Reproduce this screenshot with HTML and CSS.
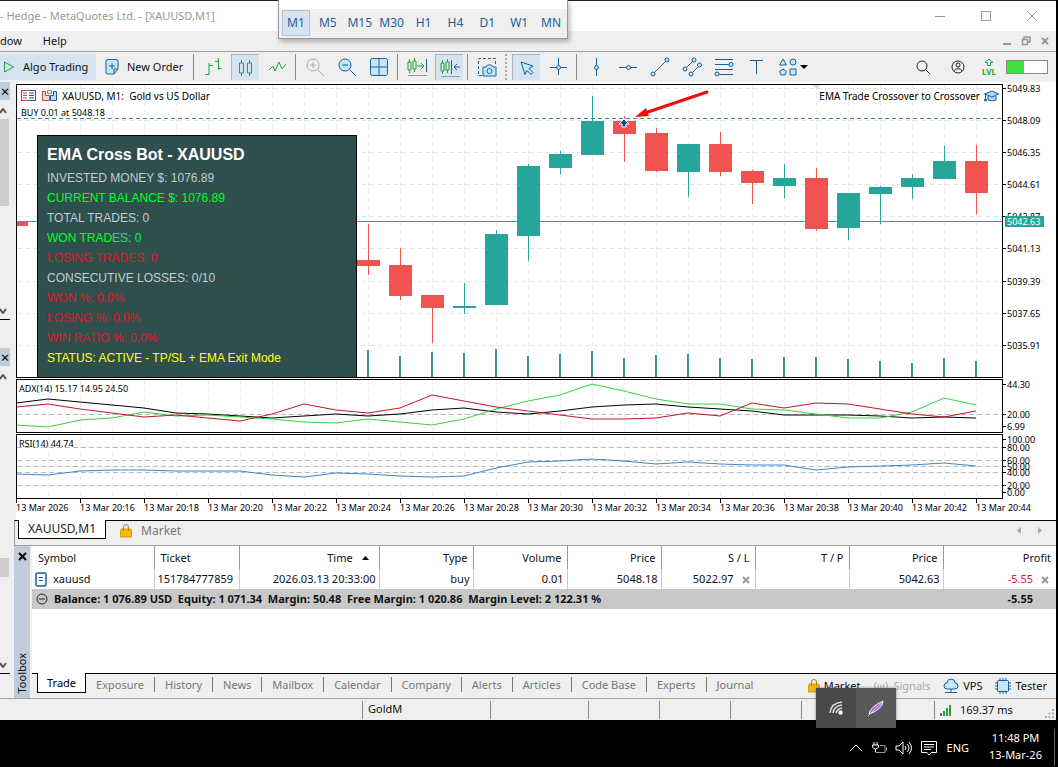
FILE: index.html
```
<!DOCTYPE html>
<html lang="en">
<head>
    <meta charset="utf-8">
    <title>MetaTrader 5 - XAUUSD,M1</title>
    <link rel="stylesheet" href="styles.css">
</head>
<body>
    <div class="window">
        <!-- Title and menu -->
        <header class="titlebar">
            <span class="title-text">- Hedge - MetaQuotes Ltd. - [XAUUSD,M1]</span>
            <div class="window-buttons">
                <button aria-label="Minimize"><svg width="12" height="12"><path d="M1 6.500h10"/></svg></button>
                <button aria-label="Maximize"><svg width="12" height="12"><path d="M1.500 1.500h9v9h-9z"/></svg></button>
                <button aria-label="Close"><svg width="12" height="12"><path d="M1 1l10 10M11 1L1 11"/></svg></button>
            </div>
        </header>
        <nav class="menubar">
            <button>dow</button>
            <button>Help</button>
            <div class="child-buttons">
                <button aria-label="Minimize chart"><svg width="10" height="10"><path d="M1 8h8" stroke-width="2"/></svg></button>
                <button aria-label="Restore chart"><svg width="10" height="10"><path d="M3 3V1h6v5H7M1.500 3.500h5v5h-5z" stroke-width="1.500"/></svg></button>
                <button aria-label="Close chart"><svg width="10" height="10"><path d="M2 2l6 6M8 2L2 8" stroke-width="2"/></svg></button>
            </div>
        </nav>

        <!-- Main toolbar -->
        <div class="toolbar">
            <button class="algo"><svg width="16" height="16"><path class="g" d="M4.500 3l9 5-9 5z"/></svg>Algo Trading</button>
            <button class="order"><svg width="16" height="18"><path class="f" d="M4 1.500h8a2 2 0 0 1 2 2V11l-4 5H4a2 2 0 0 1-2-2V3.500a2 2 0 0 1 2-2z"/><path class="b" d="M14 11h-4v5M8 5v6M5 8h6"/></svg>New Order</button>
            <i class="sep"></i>
            <button class="tool" aria-label="Bar chart"><svg width="20" height="20"><path class="g" d="M6 6v12M2 17.500h4M6 8.500h4M15.500 1v12M12 4.500h3.500M15.500 11.500h3"/></svg></button>
            <button class="tool on" aria-label="Candlesticks"><svg width="20" height="20"><path class="g" d="M5.500 2v3M5.500 15v3M3.500 5h4v10h-4zM13.500 2v3M13.500 15v3M11.500 5h4v10h-4z"/></svg></button>
            <button class="tool" aria-label="Line chart"><svg width="20" height="20"><path class="g" d="M2 13l4-4 2 5 4-9 3 7 4-5"/></svg></button>
            <i class="sep"></i>
            <button class="tool off" aria-label="Zoom in"><svg width="20" height="20"><circle class="b" cx="8" cy="8" r="6"/><path class="b" d="M5 8h6M8 5v6M12.500 12.500L19 19"/></svg></button>
            <button class="tool" aria-label="Zoom out"><svg width="20" height="20"><circle class="f" cx="8" cy="8" r="6"/><path class="b" d="M5 8h6M12.500 12.500L19 19"/></svg></button>
            <button class="tool" aria-label="Tile windows"><svg width="20" height="20"><rect class="f" x="1.500" y="1.500" width="17" height="17" rx="2"/><path class="b" d="M10 2v16M2 10h16"/></svg></button>
            <i class="sep"></i>
            <button class="tool" aria-label="Auto scroll"><svg width="20" height="20"><path class="g" d="M2.500 2v3M2.500 13v3M1 5h3v8H1zM7.500 1v3M7.500 12v3M6 4h3v8H6zM10 9h7M14 6l3 3-3 3"/><path class="b" d="M19.500 2v13"/><path class="m" d="M1 18.500h19"/></svg></button>
            <button class="tool on" aria-label="Chart shift"><svg width="20" height="20"><path class="g" d="M2.500 2v3M2.500 13v3M1 5h3v8H1zM7.500 1v3M7.500 12v3M6 4h3v8H6z"/><path class="b" d="M11.500 2v14M20 9h-6M17 6l-3 3 3 3"/><path class="m" d="M1 18.500h19"/></svg></button>
            <i class="sep"></i>
            <button class="tool" aria-label="Screenshot"><svg width="20" height="20"><path class="b" stroke-dasharray="3 2" d="M5 18.500H1.500v-17h17V7"/><path class="f" d="M6 10h3l1.500-2h4L16 10h3v9H6z"/><circle class="b" cx="12.500" cy="14" r="2.500"/></svg></button>
            <i class="sep dotted"></i>
            <button class="tool on" aria-label="Cursor"><svg width="20" height="20"><path class="f" d="M4 4l12 4-4 2.500 4 4-2 2-4-4-2 4z"/></svg></button>
            <button class="tool" aria-label="Crosshair"><svg width="20" height="20"><path class="b" d="M10.500 1v17M2 10.500h17"/><circle class="f" cx="10.500" cy="10.500" r="2"/></svg></button>
            <i class="sep"></i>
            <button class="tool" aria-label="Vertical line"><svg width="20" height="20"><path class="b" d="M10.500 1v18"/><circle class="f" cx="10.500" cy="10.500" r="2"/></svg></button>
            <button class="tool" aria-label="Horizontal line"><svg width="20" height="20"><path class="b" d="M1 10.500h18"/><circle class="f" cx="10.500" cy="10.500" r="2"/></svg></button>
            <button class="tool" aria-label="Trendline"><svg width="20" height="20"><path class="b" d="M3 17L17 3"/><circle class="f" cx="3" cy="17" r="2"/><circle class="f" cx="17" cy="3" r="2"/></svg></button>
            <button class="tool" aria-label="Channel"><svg width="20" height="20"><path class="b" d="M3 12L12 3M9 17l9-9"/><circle class="f" cx="3" cy="12" r="2"/><circle class="f" cx="12" cy="3" r="2"/><circle class="f" cx="9" cy="17" r="2"/><circle class="f" cx="17.500" cy="8" r="2"/></svg></button>
            <button class="tool" aria-label="Fibonacci"><svg width="20" height="20"><path class="b" d="M1 2.500h18M1 7.500h18M1 12.500h18M1 17.500h18"/><circle class="f" cx="17" cy="7.500" r="2"/><circle class="f" cx="3" cy="17" r="2"/></svg></button>
            <button class="tool" aria-label="Text"><svg width="20" height="20"><path class="b" d="M4 3.500h13M10.500 3.500V17"/></svg></button>
            <button class="tool" aria-label="Shapes"><svg width="20" height="20"><path class="f" d="M5 2l3.500 6h-7zM12 12h6v6h-6zM5 12l3.500 2.500L7 18H3l-1.500-3.500z"/><circle class="f" cx="15" cy="5" r="3"/></svg></button>
            <button class="caret" aria-label="More shapes"><svg width="8" height="6"><path d="M0 1h8L4 5z"/></svg></button>
            <div class="toolbar-right">
                <button class="tool" aria-label="Search"><svg width="20" height="20"><circle class="k" cx="9" cy="9" r="5"/><path class="k" d="M13 13l4 4"/></svg></button>
                <button class="tool" aria-label="Account"><svg width="20" height="20"><circle class="k" cx="10" cy="10" r="6"/><circle class="k" cx="10" cy="8" r="2"/><path class="k" d="M6 14c1-3 7-3 8 0"/></svg></button>
                <button class="level" aria-label="Level"><svg width="12" height="9"><path class="g" d="M6 1l4 3.500H7.500v3h-3v-3H2z"/></svg>LVL</button>
                <div class="battery"><span></span></div>
            </div>
        </div>

        <div class="workspace">
            <!-- Collapsed docks on the left -->
            <aside class="docks">
                <div class="dock dock-top">
                    <button class="dock-close" aria-label="Close Market Watch">×</button>
                    <svg width="8" height="6"><path d="M0 5l3-4 3 4"/></svg>
                    <div class="thumb"></div>
                    <svg class="down" width="8" height="6"><path d="M0 1l3 4 3-4"/></svg>
                </div>
                <div class="dock dock-bottom">
                    <button class="dock-close" aria-label="Close Navigator">×</button>
                    <svg width="8" height="6"><path d="M0 5l3-4 3 4"/></svg>
                    <div class="thumb"></div>
                    <svg class="down" width="8" height="6"><path d="M0 1l3 4 3-4"/></svg>
                </div>
            </aside>

            <main class="main">
                <section class="chart">
                    <div class="pane price">
                        <svg id="pricePlot"></svg>
                        <div class="chart-head">
                            <svg width="36" height="12"><rect x="0.500" y="0.500" width="14" height="10" fill="#fff" stroke="#1d5c96"/><path d="M7 .5H.5v10H7" stroke="#c8403a" fill="none"/><path d="M2 3h4M2 5.500h4M2 8h4" stroke="#d0433c"/><path d="M8 3h5M8 5.500h5M8 8h5" stroke="#1d5c96"/><path d="M21.500 1.500h3v4h4v5h-7z" fill="#fbdad8" stroke="#c8403a"/><path d="M35.500 1.500h-3v4h-3v5h6z" fill="#b5def8" stroke="#1d5c96"/><path d="M26.500 .5h4v3h-4z" fill="#eee" stroke="#888"/></svg>
                            <span>XAUUSD, M1:&nbsp; Gold vs US Dollar</span>
                        </div>
                        <div class="position-label">BUY 0.01 at 5048.18</div>
                        <div class="expert">EMA Trade Crossover to Crossover
                            <svg width="15" height="12"><path d="M4 6v4q4 2 8 0V6" fill="#a9dcf8" stroke="#1d5c96"/><path d="M0.500 4L8 1l6.500 3L8 7z" fill="#a9dcf8" stroke="#1d5c96"/><path d="M1.500 4v5" stroke="#1d5c96"/><circle cx="1.500" cy="10" r="1.500" fill="#1d5c96"/></svg>
                        </div>
                        <div class="bot-panel">
                            <h2>EMA Cross Bot - XAUUSD</h2>
                            <p>INVESTED MONEY $: 1076.89</p>
                            <p class="good">CURRENT BALANCE $: 1076.89</p>
                            <p>TOTAL TRADES: 0</p>
                            <p class="good">WON TRADES: 0</p>
                            <p class="bad">LOSING TRADES: 0</p>
                            <p>CONSECUTIVE LOSSES: 0/10</p>
                            <p class="bad">WON %: 0.0%</p>
                            <p class="bad">LOSING %: 0.0%</p>
                            <p class="bad">WIN RATIO %: 0.0%</p>
                            <p class="status">STATUS: ACTIVE - TP/SL + EMA Exit Mode</p>
                        </div>
                    </div>
                    <svg class="axis" id="priceAxis"></svg>

                    <div class="pane">
                        <svg id="adxPlot"></svg>
                        <div class="pane-label">ADX(14) 15.17 14.95 24.50</div>
                    </div>
                    <svg class="axis" id="adxAxis"></svg>

                    <div class="pane">
                        <svg id="rsiPlot"></svg>
                        <div class="pane-label">RSI(14) 44.74</div>
                    </div>
                    <svg class="axis" id="rsiAxis"></svg>

                    <div class="times" id="times"></div>
                </section>

                <div class="chart-tabs">
                    <button class="active">XAUUSD,M1</button>
                    <button><svg width="12" height="14"><path class="bag" d="M1 5h10l1 8H0z"/><path class="bag-line" d="M3.500 7V3a2 2 0 0 1 5 0v4"/></svg>Market</button>
                    <div class="scroll-arrows">
                        <button aria-label="Scroll left"><svg width="4" height="7"><path d="M4 0v7L0 3.500z"/></svg></button>
                        <button aria-label="Scroll right"><svg width="4" height="7"><path d="M0 0v7l4-3.500z"/></svg></button>
                    </div>
                </div>

                <section class="toolbox">
                    <div class="toolbox-side">
                        <button aria-label="Close Toolbox"><svg width="9" height="9"><path d="M1 1l7 7M8 1L1 8"/></svg></button>
                        <span>Toolbox</span>
                    </div>
                    <div class="toolbox-body">
                        <table class="trades">
                            <colgroup>
                                <col class="c-symbol"><col class="c-ticket"><col class="c-time">
                                <col class="c-num"><col class="c-num"><col class="c-num"><col class="c-num"><col class="c-num"><col class="c-num"><col>
                            </colgroup>
                            <thead>
                                <tr>
                                    <th class="left">Symbol</th>
                                    <th class="left">Ticket</th>
                                    <th>Time <svg class="sort" width="7" height="4"><path d="M0 4l3.500-4L7 4z"/></svg></th>
                                    <th>Type</th>
                                    <th>Volume</th>
                                    <th>Price</th>
                                    <th>S / L</th>
                                    <th>T / P</th>
                                    <th>Price</th>
                                    <th>Profit</th>
                                </tr>
                            </thead>
                            <tbody>
                                <tr>
                                    <td class="left symbol"><svg width="12" height="15"><rect x="1" y="1" width="10" height="13" rx="1.500" fill="#fff" stroke="#1d5c96" stroke-width="1.500"/><path d="M4 5.500h4M4 8.500h4" stroke="#1d5c96"/></svg>xauusd</td>
                                    <td class="left">151784777859</td>
                                    <td>2026.03.13 20:33:00</td>
                                    <td>buy</td>
                                    <td>0.01</td>
                                    <td>5048.18</td>
                                    <td>5022.97<button class="cell-x" aria-label="Remove stop loss"><svg width="8" height="8"><path d="M1 1l6 6M7 1L1 7"/></svg></button></td>
                                    <td></td>
                                    <td>5042.63</td>
                                    <td><span class="loss">-5.55</span><button class="cell-x" aria-label="Close position"><svg width="8" height="8"><path d="M1 1l6 6M7 1L1 7"/></svg></button></td>
                                </tr>
                            </tbody>
                            <tfoot>
                                <tr>
                                    <td colspan="9" class="left"><svg width="12" height="12"><circle cx="6" cy="6" r="5" fill="none" stroke="#222"/><path d="M3 6h6" stroke="#222"/></svg>Balance: 1 076.89 USD&nbsp; Equity: 1 071.34&nbsp; Margin: 50.48&nbsp; Free Margin: 1 020.86&nbsp; Margin Level: 2 122.31 %</td>
                                    <td class="total">-5.55</td>
                                </tr>
                            </tfoot>
                        </table>
                        <nav class="tabs">
                            <button class="active">Trade</button>
                            <button>Exposure</button>
                            <button>History</button>
                            <button>News</button>
                            <button>Mailbox</button>
                            <button>Calendar</button>
                            <button>Company</button>
                            <button>Alerts</button>
                            <button>Articles</button>
                            <button>Code Base</button>
                            <button>Experts</button>
                            <button>Journal</button>
                            <div class="services">
                                <a href="#"><svg width="12" height="14"><path class="bag" d="M1 5h10l1 8H0z"/><path class="bag-line" d="M3.500 7V3a2 2 0 0 1 5 0v4"/></svg>Market</a>
                                <a href="#" class="muted"><svg width="16" height="12"><path d="M3 2q-3 4 0 8M13 2q3 4 0 8M5.500 4q-1.500 2 0 4M10.500 4q1.500 2 0 4M8 5v3" fill="none" stroke="#aaa"/></svg>Signals</a>
                                <a href="#"><svg width="16" height="16"><path class="f" d="M4 11a3 3 0 0 1 0-6 4 4 0 0 1 8 0 3 3 0 0 1 0 6z"/><path class="b" d="M8 11v3M2 14.500h12"/></svg>VPS</a>
                                <a href="#"><svg width="16" height="16"><path class="b" d="M5 0v16M8 0v16M11 0v16M0 5h16M0 8h16M0 11h16"/><rect class="f" x="2.500" y="2.500" width="11" height="11" rx="1"/></svg>Tester</a>
                            </div>
                        </nav>
                    </div>
                </section>
            </main>
        </div>

        <footer class="statusbar">
            <span class="s-help"></span>
            <span class="s-profile">GoldM</span>
            <span class="s-wide"></span>
            <span class="s-cell"></span>
            <span class="s-cell"></span>
            <span class="s-cell"></span>
            <span class="s-rest"></span>
            <span class="s-ping"><svg width="14" height="12"><path d="M1 12V9M4 12V7M7 12V4M10 12V1" stroke="#2a9d3a" stroke-width="2"/></svg>169.37 ms</span>
            <svg class="grip" width="9" height="9"><path d="M7 0h2v2H7zM7 3.500h2v2H7zM7 7h2v2H7zM3.500 3.500h2v2h-2zM3.500 7h2v2h-2zM0 7h2v2H0z"/></svg>
        </footer>
    </div>

    <!-- Floating timeframe bar -->
    <div class="timeframes">
        <button class="on">M1</button>
        <button>M5</button>
        <button>M15</button>
        <button>M30</button>
        <button>H1</button>
        <button>H4</button>
        <button>D1</button>
        <button>W1</button>
        <button>MN</button>
    </div>

    <div class="taskbar">
        <!-- Hidden icons popup -->
        <div class="tray-popup">
            <button aria-label="Cast"><svg width="14" height="14"><path d="M1 12Q2 2 13 1M4 12Q5 5 13 4M7 12Q8 8 13 7" stroke="#ddd" fill="none" stroke-width="1.500"/><path d="M10 10h3v3h-3z" fill="#fff"/></svg></button>
            <button class="lit" aria-label="Feather"><svg width="18" height="18"><path d="M2 15Q3 8 16 2 16 8 7 13z" fill="#9a63cf"/><path d="M1 17Q8 9 15 4" stroke="#e3c8f8" fill="none"/></svg></button>
        </div>
        <button aria-label="Show hidden icons"><svg width="14" height="14"><path d="M1 10l6-6 6 6"/></svg></button>
        <button aria-label="Battery"><svg width="16" height="14"><path d="M3 1v3M6 1v3M1.500 4h6v2q-1 2-3 2-2 0-3-2zM4.500 8v3"/><path d="M4.500 11.500H14v-7H9M15.500 6.500v3" class="dim"/></svg></button>
        <button aria-label="Volume"><svg width="18" height="16"><path d="M1 6h3l4-4v12l-4-4H1zM10 6q2 2 0 4M12 4q4 4 0 8M14 2q5 6 0 12"/></svg></button>
        <button aria-label="Notifications"><svg width="16" height="16"><path d="M.5 1.500h15v11h-5L8 15l-2-2.500H.5zM3 4.500h10M3 7h10M3 9.500h7"/></svg></button>
        <button class="lang">ENG</button>
        <div class="clock"><span>11:48 PM</span><span>13-Mar-26</span></div>
    </div>
    <script src="chart.js"></script>
</body>
</html>
```
FILE: styles.css
```
* {
    box-sizing: border-box;
}

body {
    margin: 0;
    min-height: 100vh;
    display: flex;
    flex-direction: column;
    background: #000;
    color: #111;
    font-family: "Noto Sans", "Open Sans", sans-serif;
    font-size: 11px;
    line-height: 16px;
}

button {
    margin: 0;
    padding: 0;
    border: none;
    background: none;
    color: inherit;
    font: inherit;
}

a {
    color: inherit;
    text-decoration: none;
}

svg {
    display: block;
    flex: none;
}

/* Icon strokes */
.g { fill: none; stroke: #1fa437; }
.b { fill: none; stroke: #1d6099; }
.f { fill: #c3e6fb; stroke: #1d6099; }
.k { fill: none; stroke: #222; }
.m { stroke: #999; }
.off .b { stroke: #aaa; }
.bag { fill: #f5b912; stroke: #d39b0a; }
.bag-line { fill: none; stroke: #b98707; }

.window {
    flex: 1;
    display: flex;
    flex-direction: column;
    margin-right: 2px;
    border-top: 1px solid #222;
    background: #efefef;
}

.titlebar {
    display: flex;
    align-items: center;
    justify-content: space-between;
    height: 30px;
    background: #fff;
    color: #999;
}

.window-buttons {
    display: flex;
    padding-right: 1px;
}

.window-buttons button {
    display: flex;
    justify-content: center;
    width: 46px;
}

.window-buttons svg,
.child-buttons svg {
    fill: none;
    stroke: #999;
}

.menubar {
    display: flex;
    align-items: center;
    gap: 21px;
    height: 21px;
    border-bottom: 1px solid #a0a0a0;
}

.child-buttons {
    display: flex;
    gap: 9px;
    margin-left: auto;
    padding-right: 6px;
}

.toolbar {
    display: flex;
    align-items: center;
    height: 30px;
}

.algo,
.order {
    display: flex;
    align-items: center;
    gap: 7px;
    height: 26px;
}

.algo {
    width: 96px;
    background: #d6e3f1;
}

.order {
    width: 95px;
    padding-left: 8px;
}

.sep {
    width: 6px;
    height: 26px;
    background: linear-gradient(#888, #888) 2px 0 / 1px 100% no-repeat;
}

.sep.dotted {
    width: 7px;
    background: repeating-linear-gradient(#aaa 0 2px, #efefef 2px 4px) 2px 0 / 2px 100% no-repeat;
}

.tool {
    display: flex;
    align-items: center;
    justify-content: center;
    width: 28px;
    height: 26px;
    margin: 0 2px;
}

.tool.on {
    background: #d6e3f1;
    border-top: 1px solid #aab4be;
    border-left: 1px solid #aab4be;
}

.caret {
    margin-left: -4px;
}

.toolbar-right {
    display: flex;
    align-items: center;
    gap: 3px;
    margin-left: auto;
    padding-right: 8px;
}

.level {
    display: flex;
    flex-direction: column;
    align-items: center;
    width: 24px;
    margin-right: 2px;
    color: #1fa437;
    font-size: 8px;
    font-weight: bold;
    line-height: 9px;
}

.battery {
    width: 42px;
    height: 14px;
    border: 1px solid #888;
    background: #fff;
}

.battery span {
    display: block;
    width: 17px;
    height: 12px;
    background: #3fe03f;
}

.workspace {
    flex: 1;
    display: flex;
}

/* Left docks */
.docks {
    display: flex;
    flex-direction: column;
    gap: 28px;
    width: 14px;
    padding-bottom: 24px;
}

.dock {
    display: flex;
    flex-direction: column;
    width: 10px;
    border-bottom: 1px solid #000;
}

.dock-top {
    height: 238px;
}

.dock-bottom {
    flex: 1;
}

.dock svg {
    margin: 8px 0 5px;
    fill: none;
    stroke: #555;
    stroke-width: 2;
}

.dock .down {
    margin: auto 0 5px;
}

.dock-close {
    width: 10px;
    height: 18px;
    overflow: hidden;
    background: #bfccdb;
    color: #000;
    font-size: 15px;
    line-height: 18px;
}

.thumb {
    width: 9px;
    height: 87px;
    background: #cdcdcd;
}

.dock-bottom .thumb {
    height: 19px;
    margin-top: 173px;
}

.main {
    flex: 1;
    display: flex;
    flex-direction: column;
    min-width: 0;
}

/* Chart */
.chart {
    display: grid;
    grid-template-columns: 1fr 53px;
    grid-template-rows: 294px 54px 65px 20px;
    row-gap: 1px;
    margin-left: 2px;
    padding-top: 2px;
    background: #fff;
    color: #000;
    font-size: 9px;
    line-height: 12px;
}

.pane {
    position: relative;
    min-width: 0;
    border: 1px solid #000;
}

.pane > svg,
.axis {
    width: 100%;
    height: 100%;
}

.axis {
    overflow: visible;
}

.chart-head {
    position: absolute;
    top: 5px;
    left: 4px;
    display: flex;
    align-items: center;
    gap: 5px;
    font-size: 10px;
}

.position-label {
    position: absolute;
    top: 22px;
    left: 4px;
}

.pane-label {
    position: absolute;
    top: 3px;
    left: 2px;
}

.expert {
    position: absolute;
    top: 5px;
    right: 3px;
    display: flex;
    align-items: center;
    gap: 4px;
    font-size: 10px;
}

.bot-panel {
    position: absolute;
    top: 50px;
    bottom: 0;
    left: 20px;
    width: 320px;
    padding: 9px 9px 0;
    border: 1px solid #000;
    border-bottom: none;
    background: #2f4f4f;
    color: #c4cccc;
    font-family: "Liberation Sans", Arial, sans-serif;
    font-size: 12px;
    line-height: 20px;
}

.bot-panel h2 {
    margin: 0 0 3px;
    color: #fff;
    font-size: 16px;
    line-height: 20px;
}

.bot-panel p {
    margin: 0;
}

.bot-panel .good { color: #00ff20; }
.bot-panel .bad { color: #e01522; }
.bot-panel .status { color: #ffff20; }

.times {
    grid-column: 1 / 3;
    display: flex;
    margin-top: -1px;
    overflow: hidden;
    white-space: nowrap;
}

.times span {
    flex: none;
    width: 64px;
    padding-top: 3px;
    background: linear-gradient(#000, #000) 0 0 / 1px 4px no-repeat;
}

.chart-tabs {
    display: flex;
    height: 25px;
    padding-left: 3px;
    border-top: 1px solid #000;
    border-left: 1px solid #999;
    color: #777;
    font-size: 12px;
}

.chart-tabs > button {
    display: flex;
    align-items: center;
    gap: 9px;
    height: 19px;
    padding: 0 14px;
}

.chart-tabs .active {
    margin-top: -1px;
    padding: 0 9px;
    border: 1px solid #000;
    border-top: none;
    background: #fff;
    color: #222;
}

.scroll-arrows {
    display: flex;
    gap: 17px;
    margin: 0 14px 6px auto;
    fill: #aaa;
}

/* Toolbox */
.toolbox {
    flex: 1;
    display: flex;
    border-top: 1px solid #a0a0a0;
}

.toolbox-side {
    display: flex;
    flex-direction: column;
    align-items: center;
    justify-content: space-between;
    width: 16px;
    padding: 6px 0 4px;
    background: #bfccdb;
}

.toolbox-side svg {
    stroke: #000;
    stroke-width: 2;
}

.toolbox-side span {
    writing-mode: vertical-rl;
    transform: rotate(180deg);
}

.toolbox-body {
    flex: 1;
    display: flex;
    flex-direction: column;
    justify-content: space-between;
    min-width: 0;
    margin-left: 2px;
    background: #fff;
}

.trades {
    width: 100%;
    border-collapse: collapse;
    table-layout: fixed;
}

.c-symbol { width: 122px; }
.c-ticket { width: 85px; }
.c-time { width: 140px; }
.c-num { width: 94px; }

.trades th,
.trades td {
    height: 20px;
    padding: 0 3px;
    border-right: 1px solid #ccc;
    font-weight: normal;
    text-align: right;
    white-space: nowrap;
}

.trades th {
    height: 23px;
    padding: 0 5px;
    border-right-color: #999;
}

.trades th.left {
    padding-left: 6px;
}

.trades tr > :last-child {
    border-right: none;
}

.trades .left {
    text-align: left;
}

.trades svg {
    display: inline-block;
    vertical-align: middle;
}

.sort {
    margin: 0 5px 2px 6px;
}

.symbol svg {
    margin-right: 6px;
}

.loss {
    color: #e02020;
}

.cell-x {
    margin: 0 2px 0 8px;
}

.trades tr > :last-child .cell-x {
    margin-right: 4px;
}

.cell-x path {
    stroke: #999;
    stroke-width: 2;
}

.trades tfoot td {
    height: 20px;
    border: none;
    background: #c8c8c8;
    font-weight: bold;
}

.trades tfoot svg {
    margin: 0 6px 2px 1px;
}

.trades .total {
    padding-right: 23px;
}

.tabs {
    display: flex;
    align-items: flex-start;
    height: 25px;
    padding-left: 5px;
    border-top: 1px solid #000;
    background: #efefef;
    color: #777;
}

.tabs > button {
    height: 15px;
    margin-top: 3px;
    padding: 0 10px;
    border-right: 1px solid #777;
    line-height: 10px;
}

.tabs > button:nth-last-child(2) {
    border-right: none;
}

.tabs > .active {
    height: 20px;
    margin-top: -1px;
    padding: 0 9px;
    border: 1px solid #000;
    border-top: none;
    background: #fff;
    color: #000;
    line-height: 18px;
}

.services {
    display: flex;
    gap: 13px;
    margin: 4px 9px 0 auto;
    color: #111;
}

.services a {
    display: flex;
    align-items: center;
    gap: 4px;
}

.services .muted {
    color: #aaa;
}

.statusbar {
    display: flex;
    align-items: center;
    height: 22px;
    border-top: 1px solid #a0a0a0;
}

.statusbar span {
    flex: none;
    height: 18px;
    border-right: 1px solid #888;
}

.s-help { width: 363px; }
.s-profile { width: 128px; padding-left: 5px; }
.s-wide { width: 98px; }
.s-cell { width: 71px; }
.statusbar .s-rest { flex: 1; }

.statusbar .s-ping {
    display: flex;
    align-items: center;
    gap: 6px;
    width: 110px;
    padding-left: 5px;
    border-right: none;
}

.grip {
    margin: 8px 2px 0 0;
    fill: #b0b0b0;
}

/* Timeframe bar floats over the title */
.timeframes {
    position: absolute;
    top: 0;
    left: 278px;
    display: flex;
    width: 290px;
    height: 39px;
    padding: 10px 0 2px 1px;
    border: 1px solid #999;
    border-top: none;
    background: linear-gradient(#fff 9px, #efefef 9px);
    box-shadow: 2px 3px 5px #0004;
    color: #1b5e97;
    font-size: 12px;
}

.timeframes button {
    width: 28px;
    margin: 0 2px;
    white-space: nowrap;
}

.timeframes .on {
    border: 1px solid #b5c3d1;
    background: #d6e3f1;
}

/* Taskbar */
.taskbar {
    position: relative;
    display: flex;
    align-items: center;
    justify-content: flex-end;
    gap: 8px;
    height: 47px;
    padding: 8px 3px 0 0;
    color: #fff;
}

.taskbar button svg {
    fill: none;
    stroke: #fff;
}

.taskbar .dim {
    stroke: #999;
}

.lang {
    margin-left: 2px;
}

.clock {
    display: flex;
    flex-direction: column;
    align-items: center;
    width: 78px;
    border-right: 1px solid #666;
    padding-bottom: 3px;
    line-height: 17px;
}

.tray-popup {
    position: absolute;
    top: -32px;
    right: 162px;
    display: flex;
    width: 80px;
    height: 40px;
    background: #494949;
    box-shadow: 0 0 3px #0006;
}

.tray-popup button {
    display: flex;
    flex: 1;
    align-items: center;
    justify-content: center;
}

.tray-popup .lit {
    background: #595959;
}
```
FILE: chart.js
```
const NS = "http://www.w3.org/2000/svg";
const STEP = 32;      // pixels per bar
const UP = "#26a69a";
const DOWN = "#ef5350";

// bar index, high, body top, body bottom, low, rising
const candles = [
    [0, 137, 137, 141, 141, 0],
    [11, 139, 175, 181, 190, 0],
    [12, 163, 180, 211, 215, 0],
    [13, 210, 210, 223, 258, 0],
    [14, 198, 221, 223, 229, 1],
    [15, 145, 149, 220, 220, 1],
    [16, 79, 81, 151, 176, 1],
    [17, 66, 69, 83, 89, 1],
    [18, 11, 36, 70, 70, 1],
    [19, 31, 36, 49, 77, 0],
    [20, 43, 48, 86, 87, 0],
    [21, 59, 59, 87, 112, 1],
    [22, 47, 59, 87, 91, 0],
    [23, 85, 86, 98, 119, 0],
    [24, 79, 93, 101, 113, 1],
    [25, 83, 93, 144, 146, 0],
    [26, 108, 108, 143, 155, 1],
    [27, 101, 102, 109, 139, 1],
    [28, 89, 93, 102, 114, 1],
    [29, 61, 76, 94, 94, 1],
    [30, 60, 76, 108, 129, 0]
];

// tick volume heights, from bar 11 on
const volumes = [27, 21, 25, 24, 28, 21, 23, 26, 19, 22, 23, 19, 18, 20, 20, 18, 16, 14, 19, 16];

const adx = [18, 14, 17, 20, 23, 28, 29, 31, 33, 31, 29, 31, 29, 25, 23, 27, 29, 26, 22, 20, 19, 22, 24, 26, 30, 30, 30, 31, 33, 32, 33];
const minusDi = [22, 19, 24, 28, 32, 30, 33, 36, 29, 19, 25, 28, 23, 10, 16, 22, 26, 30, 34, 34, 33, 28, 31, 18, 23, 18, 19, 24, 29, 32, 26];
const plusDi = [40, 42, 35, 33, 27, 31, 30, 32, 34, 37, 38, 34, 37, 40, 34, 24, 16, 10, -1, 6, 14, 19, 19, 24, 25, 29, 33, 33, 27, 13, 20];
const rsi = [39, 40, 36, 35, 35, 36, 36, 36, 40, 42, 38, 39, 41, 42, 41, 33, 27, 26, 24, 26, 29, 27, 29, 30, 30, 35, 32, 31, 30, 28, 31];

function add(parent, name, attrs, text) {
    const el = document.createElementNS(NS, name);
    for (const key in attrs) el.setAttribute(key, attrs[key]);
    if (text) el.textContent = text;
    parent.appendChild(el);
    return el;
}

function rect(parent, x, y, width, height, fill) {
    add(parent, "rect", { x, y, width, height, fill });
}

function level(parent, y, color, dash) {
    add(parent, "line", {
        x1: 0, x2: "100%", y1: y, y2: y, stroke: color,
        "stroke-dasharray": dash, "shape-rendering": "crispEdges", transform: "translate(0 .5)"
    });
}

function verticals(parent) {
    for (let x = 31; x < 985; x += STEP) {
        add(parent, "line", {
            x1: x, x2: x, y1: 0, y2: "100%", stroke: "#ececec",
            "stroke-dasharray": "5 3", "shape-rendering": "crispEdges", transform: "translate(.5 0)"
        });
    }
}

function curve(parent, values, color, shift) {
    const points = values.map((v, i) => `${i * STEP - 1},${v + shift}`).join(" ");
    add(parent, "polyline", { points, fill: "none", stroke: color });
}

function axis(id, labels) {
    const svg = document.getElementById(id);
    labels.forEach(([y, text]) => {
        rect(svg, 0, y, 3, 1, "#000");
        add(svg, "text", { x: 4, y: y + 4 }, text);
    });
    return svg;
}

// Price
const price = document.getElementById("pricePlot");
verticals(price);
[3, 35, 67, 99, 131, 163, 196, 228, 260].forEach(y => level(price, y, "#e6e6e6", "5 3"));
level(price, 33, "#2f8f80", "4 3");
rect(price, 0, 136, "100%", 1, UP);
candles.forEach(([i, high, top, bottom, low, up]) => {
    const x = i * STEP - 1;
    const color = up ? UP : DOWN;
    rect(price, x, high, 1, low - high, color);
    rect(price, x - 11, top, 23, bottom - top, color);
});
volumes.forEach((h, n) => rect(price, (n + 11) * STEP - 2, 292 - h, 2, h, "#3b978a"));
add(price, "path", { d: "M607 34l5 5h-3v3h-4v-3h-3z", fill: "#0d4f91", stroke: "#fff" });
add(price, "path", { d: "M690 7L628 28", stroke: "#f40b0b", "stroke-width": 3, "stroke-linecap": "round" });
add(price, "path", { d: "M618 32l11-9 3 8z", fill: "#f40b0b" });
add(price, "path", { d: "M795 0h9l-4 4z", fill: "#ddd" });

const priceAxis = axis("priceAxis", [
    [4, "5049.83"], [36, "5048.09"], [68, "5046.35"], [100, "5044.61"], [132, "5042.87"],
    [164, "5041.13"], [197, "5039.39"], [229, "5037.65"], [261, "5035.91"]
]);
rect(priceAxis, 2, 132, 39, 11, UP);
add(priceAxis, "text", { x: 4, y: 141, fill: "#fff" }, "5042.63");

// ADX
const adxPlot = document.getElementById("adxPlot");
verticals(adxPlot);
level(adxPlot, 34, "#b8b8b8", "5 3");
curve(adxPlot, adx, "#000", 5);
curve(adxPlot, plusDi, "#3ad13a", 5);
curve(adxPlot, minusDi, "#c01820", 5);
axis("adxAxis", [[5, "44.30"], [35, "20.00"], [47, "6.99"]]);

// RSI
const rsiPlot = document.getElementById("rsiPlot");
verticals(rsiPlot);
[12, 25, 31, 37, 50].forEach(y => level(rsiPlot, y, "#b8b8b8", "5 3"));
curve(rsiPlot, rsi, "#3a86d0", 0);
axis("rsiAxis", [[5, "100.00"], [13, "80.00"], [26, "60.00"], [32, "50.00"], [38, "40.00"], [51, "20.00"], [58, "0.00"]]);

// Time scale, a label every second bar
const times = document.getElementById("times");
for (let m = 14; m <= 44; m += 2) {
    const span = document.createElement("span");
    span.textContent = m === 14 ? "13 Mar 2026" : "13 Mar 20:" + m;
    times.appendChild(span);
}
```
